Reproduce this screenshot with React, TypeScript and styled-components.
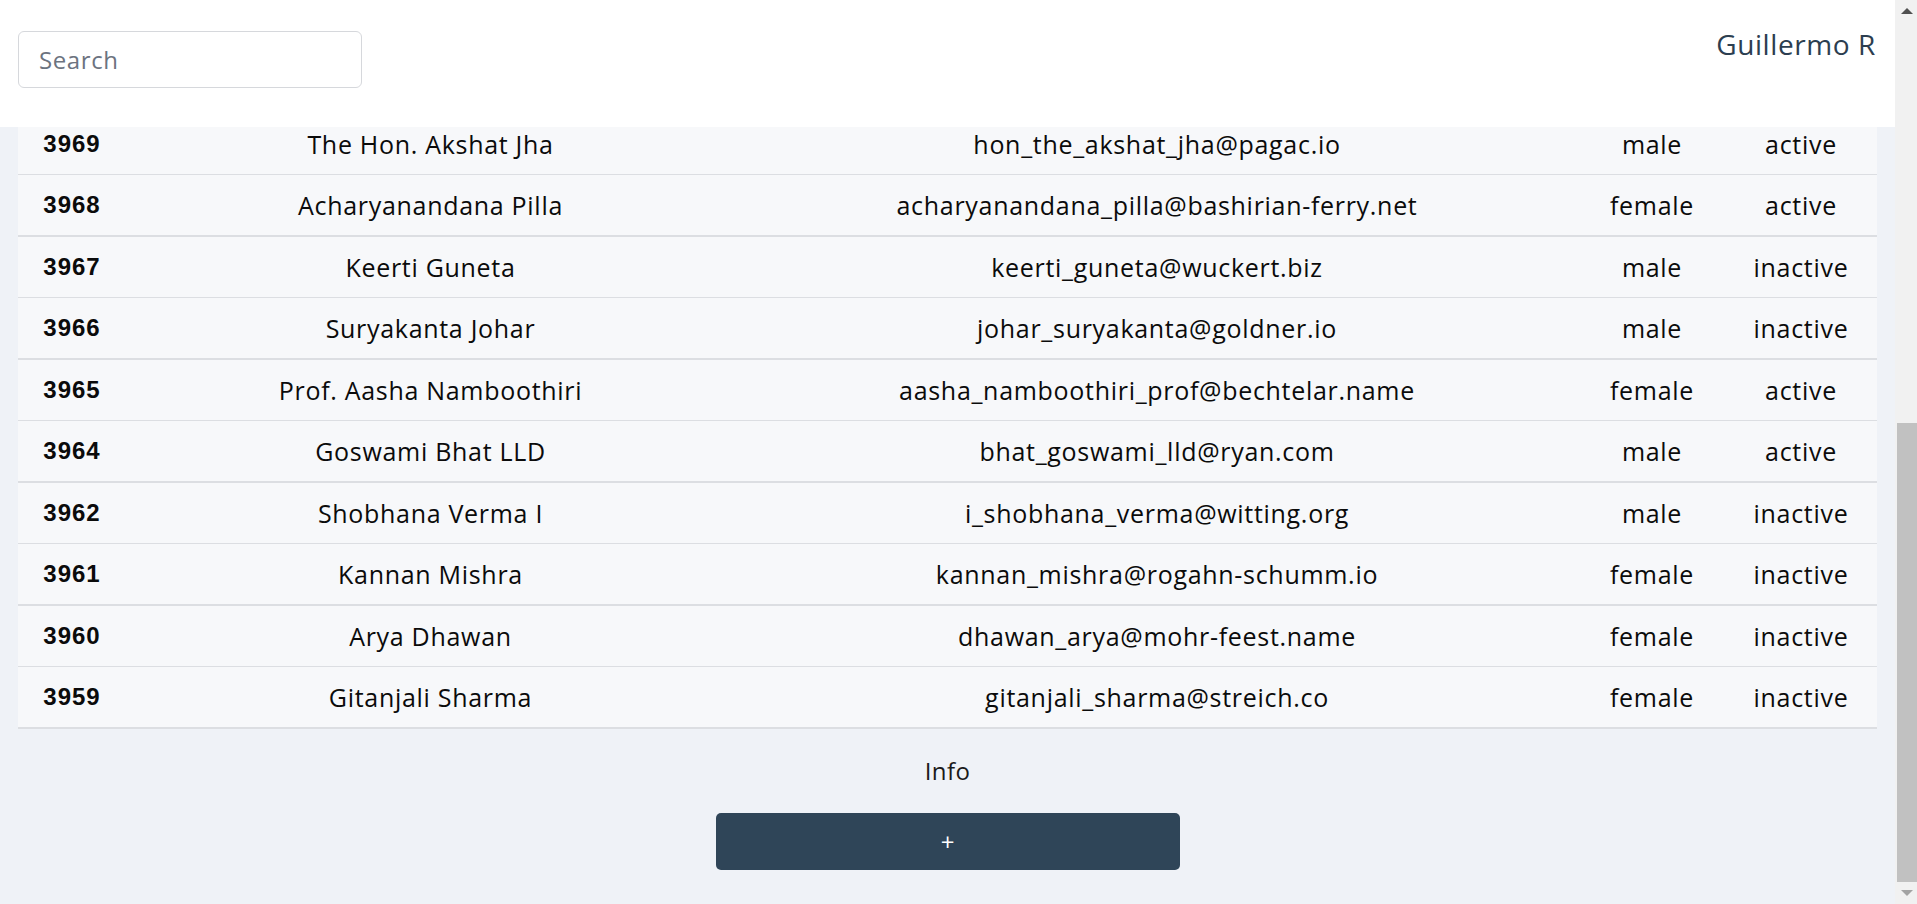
import React from "react";
import styled, { createGlobalStyle } from "styled-components";

const GlobalStyle = createGlobalStyle`
  html, body { margin: 0; padding: 0; height: 100%; overflow: hidden; }
  body { background: #eff2f7; font-family: "Open Sans", "Noto Sans", sans-serif; }
  #root { height: 100%; }
  * { box-sizing: border-box; }
`;

const Viewport = styled.div`
  display: flex;
  width: 100%;
  height: 904px;
`;

const Page = styled.div`
  position: relative;
  flex: 1;
  overflow: hidden;
  background: #eff2f7;
`;

const Header = styled.header`
  position: absolute;
  top: 0;
  left: 0;
  right: 0;
  z-index: 2;
  height: 127px;
  background: #ffffff;
  display: flex;
  justify-content: space-between;
  align-items: flex-start;
  padding: 0 19px 0 18px;
`;

const SearchInput = styled.input`
  margin-top: 31px;
  width: 344px;
  height: 57px;
  border: 1px solid #d6d8dc;
  border-radius: 6px;
  padding: 0 20px;
  font-family: "Open Sans", sans-serif;
  font-size: 24px;
  letter-spacing: 0.6px;
  color: #333;
  background: #fff;
  outline: none;
  &::placeholder { color: #6c737f; }
`;

const UserName = styled.div`
  margin-top: 25px;
  font-size: 28px;
  color: #2c3e50;
  letter-spacing: 0.6px;
`;

const Content = styled.main`
  padding: 114px 18px 0 18px;
  display: flex;
  flex-direction: column;
  align-items: stretch;
`;

const Table = styled.div`
  display: flex;
  flex-direction: column;
`;

const Row = styled.div<{ $thick: boolean }>`
  display: grid;
  grid-template-columns: 108px 609px 1fr 146px 152px;
  align-items: center;
  height: ${(p) => (p.$thick ? 62 : 61)}px;
  background: #f7f8fa;
  border-bottom: ${(p) => (p.$thick ? 2 : 1)}px solid #dcdee2;
`;

const Cell = styled.div`
  text-align: center;
  font-size: 25px;
  color: #0b0b0b;
  white-space: nowrap;
  letter-spacing: 0.7px;
`;

const IdCell = styled(Cell)`
  font-family: "Liberation Sans", Arial, sans-serif;
  font-weight: 700;
  font-size: 24px;
  letter-spacing: 1px;
`;

const Footer = styled.div`
  display: flex;
  flex-direction: column;
  align-items: center;
`;

const InfoText = styled.div`
  margin-top: 24px;
  font-size: 24px;
  line-height: 36px;
  letter-spacing: 0.4px;
  color: #1a1a1a;
`;

const AddButton = styled.button`
  margin-top: 24px;
  width: 464px;
  height: 57px;
  border: none;
  border-radius: 5px;
  background: #2f4558;
  color: #ffffff;
  font-family: "Open Sans", sans-serif;
  font-size: 24px;
  cursor: pointer;
`;

const ScrollTrack = styled.div`
  width: 22px;
  height: 904px;
  background: #f1f1f1;
  display: flex;
  flex-direction: column;
  align-items: stretch;
`;

const ArrowBox = styled.div`
  height: 22px;
  display: flex;
  align-items: center;
  justify-content: center;
  padding-left: 2px;
`;

const ArrowUp = styled.div<{ $color: string }>`
  width: 0;
  height: 0;
  border-left: 6px solid transparent;
  border-right: 6px solid transparent;
  border-bottom: 6px solid ${(p) => p.$color};
`;

const ArrowDown = styled.div<{ $color: string }>`
  width: 0;
  height: 0;
  border-left: 6px solid transparent;
  border-right: 6px solid transparent;
  border-top: 6px solid ${(p) => p.$color};
`;

const ThumbArea = styled.div`
  flex: 1;
  display: flex;
  flex-direction: column;
  justify-content: flex-end;
  padding: 0 0 0 2px;
`;

const Thumb = styled.div`
  height: 459px;
  background: #c1c1c1;
`;

const rows = [
  ["3969", "The Hon. Akshat Jha", "hon_the_akshat_jha@pagac.io", "male", "active"],
  ["3968", "Acharyanandana Pilla", "acharyanandana_pilla@bashirian-ferry.net", "female", "active"],
  ["3967", "Keerti Guneta", "keerti_guneta@wuckert.biz", "male", "inactive"],
  ["3966", "Suryakanta Johar", "johar_suryakanta@goldner.io", "male", "inactive"],
  ["3965", "Prof. Aasha Namboothiri", "aasha_namboothiri_prof@bechtelar.name", "female", "active"],
  ["3964", "Goswami Bhat LLD", "bhat_goswami_lld@ryan.com", "male", "active"],
  ["3962", "Shobhana Verma I", "i_shobhana_verma@witting.org", "male", "inactive"],
  ["3961", "Kannan Mishra", "kannan_mishra@rogahn-schumm.io", "female", "inactive"],
  ["3960", "Arya Dhawan", "dhawan_arya@mohr-feest.name", "female", "inactive"],
  ["3959", "Gitanjali Sharma", "gitanjali_sharma@streich.co", "female", "inactive"],
];

export default function App() {
  return (
    <>
      <GlobalStyle />
      <Viewport>
        <Page>
          <Header>
            <SearchInput placeholder="Search" />
            <UserName>Guillermo R</UserName>
          </Header>
          <Content>
            <Table>
              {rows.map((r, i) => (
                <Row key={r[0]} $thick={i % 2 === 1}>
                  <IdCell>{r[0]}</IdCell>
                  <Cell>{r[1]}</Cell>
                  <Cell>{r[2]}</Cell>
                  <Cell>{r[3]}</Cell>
                  <Cell>{r[4]}</Cell>
                </Row>
              ))}
            </Table>
            <Footer>
              <InfoText>Info</InfoText>
              <AddButton>+</AddButton>
            </Footer>
          </Content>
        </Page>
        <ScrollTrack>
          <ArrowBox>
            <ArrowUp $color="#505050" />
          </ArrowBox>
          <ThumbArea>
            <Thumb />
          </ThumbArea>
          <ArrowBox>
            <ArrowDown $color="#a3a3a3" />
          </ArrowBox>
        </ScrollTrack>
      </Viewport>
    </>
  );
}
